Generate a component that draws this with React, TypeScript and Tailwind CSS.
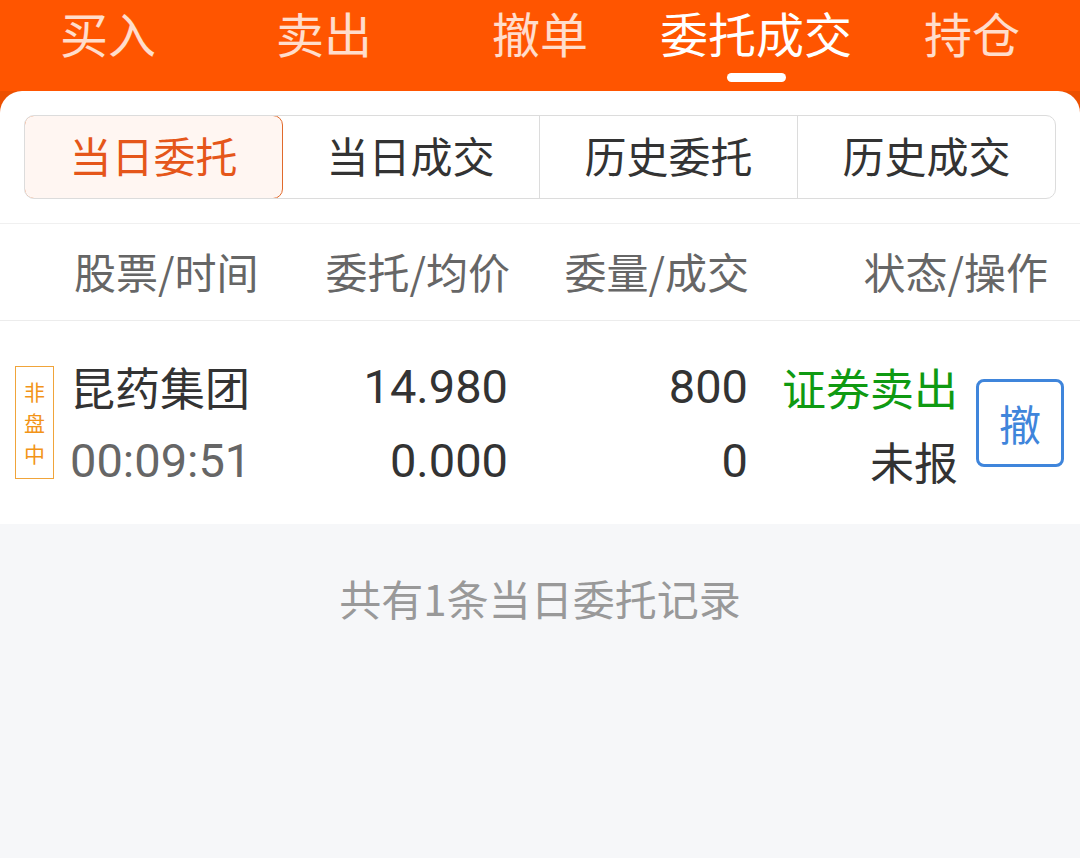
const cjk = { fontFamily: '"Noto Sans CJK SC", "Noto Sans", sans-serif' };
const num = { fontFamily: 'Roboto, "Noto Sans CJK SC", sans-serif' };

const tabs = ["买入", "卖出", "撤单", "委托成交", "持仓"];
const segments = ["当日委托", "当日成交", "历史委托", "历史成交"];

export default function App() {
  return (
    <div className="w-[1080px] h-[858px] flex flex-col bg-[#f6f7f9] overflow-hidden" style={cjk}>
      {/* top tab bar */}
      <div className="bg-[#ff5500]">
        <div className="grid grid-cols-5 h-[91px]">
          {tabs.map((t, i) => (
            <div key={t} className="flex flex-col items-center pt-[1px]">
              <span
                className={`text-[48px] leading-[62px] ${i === 3 ? "text-white" : "text-white/80"}`}
              >
                {t}
              </span>
              {i === 3 && <div className="mt-[10px] w-[59px] h-[9px] rounded-full bg-white" />}
            </div>
          ))}
        </div>
      </div>

      <div className="bg-[#ec5000]">
        <div className="bg-white rounded-t-[22px]">
          {/* segmented control */}
          <div className="px-[24px] pt-[24px] pb-[24px] border-b border-[#f0f0f0]">
            <div className="flex h-[84px] rounded-[10px] border border-[#dcdcdc] overflow-hidden">
              {segments.map((s, i) => (
                <div
                  key={s}
                  className={`flex-1 flex items-center justify-center text-[42px] pb-[5px] ${
                    i === 0
                      ? "bg-[#fff6f2] text-[#e5561a] border border-[#e06a2c] rounded-[10px] -m-px"
                      : "text-[#333] border-l border-[#dcdcdc]"
                  } ${i === 1 ? "border-l-0" : ""}`}
                >
                  {s}
                </div>
              ))}
            </div>
          </div>

          {/* column headers */}
          <div className="flex items-center h-[97px] pb-[4px] border-b border-[#ececec] text-[42px] text-[#666]">
            <div className="w-[280px] pl-[74px]">股票/时间</div>
            <div className="w-[230px] text-right">委托/均价</div>
            <div className="w-[239px] text-right">委量/成交</div>
            <div className="w-[299px] text-right">状态/操作</div>
          </div>

          {/* data row */}
          <div className="flex items-center h-[203px] pl-[15px]">
            <div className="w-[39px] h-[113px] border border-[#f0a43a] flex flex-col items-center justify-center text-[21px] leading-[31px] text-[#f29418]">
              <span>非</span>
              <span>盘</span>
              <span>中</span>
            </div>
            <div className="w-[200px] ml-[16px] mt-[3px] flex flex-col">
              <span className="h-[74px] flex items-center text-[45px] text-[#333]">昆药集团</span>
              <span className="h-[74px] flex items-center text-[47px] text-[#666]" style={num}>
                00:09:51
              </span>
            </div>
            <div className="w-[238px] mt-[3px] flex flex-col items-end text-[47px] text-[#333]" style={num}>
              <span className="h-[74px] flex items-center">14.980</span>
              <span className="h-[74px] flex items-center">0.000</span>
            </div>
            <div className="w-[240px] mt-[3px] flex flex-col items-end text-[47px] text-[#333]" style={num}>
              <span className="h-[74px] flex items-center">800</span>
              <span className="h-[74px] flex items-center">0</span>
            </div>
            <div className="w-[210px] mt-[3px] flex flex-col items-end text-[44px]">
              <span className="h-[74px] flex items-center text-[#0f9a12]">证券卖出</span>
              <span className="h-[74px] flex items-center text-[#333]">未报</span>
            </div>
            <button className="ml-[18px] w-[88px] h-[88px] rounded-[8px] border-[3px] border-[#3f85db] text-[#3f85db] text-[42px] flex items-center justify-center">
              撤
            </button>
          </div>
        </div>
      </div>

      {/* footer */}
      <div className="flex-1 flex justify-center pt-[42px] text-[42px] text-[#999]">
        共有1条当日委托记录
      </div>
    </div>
  );
}
